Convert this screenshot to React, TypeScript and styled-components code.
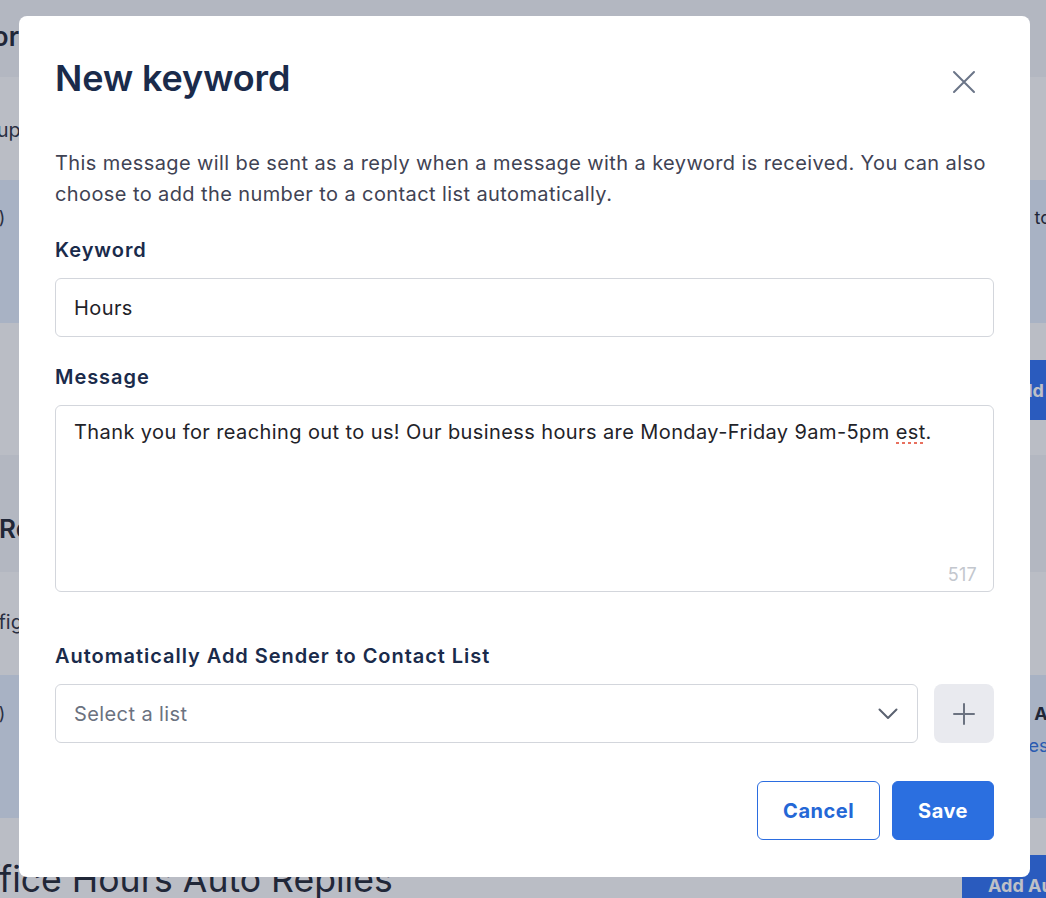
import React from 'react';
import styled, { createGlobalStyle } from 'styled-components';

const GlobalStyle = createGlobalStyle`
	* {
		box-sizing: border-box;
	}
	html,
	body {
		margin: 0;
		padding: 0;
		overflow: hidden;
	}
	body {
		font-family: Inter, 'Noto Sans', sans-serif;
		background: #fafbfd;
		color: #1b2a4b;
	}
`;

type Tone = 'gray' | 'white' | 'blue';

const tones: Record<Tone, string> = {
	gray: '#f0f2f7',
	white: '#fafbfd',
	blue: '#e0ebfb',
};

// settings page sitting behind the dialog (scrolled a little to the right)
const Page = styled.div`
	width: 1180px;
	margin-left: -40px;
	display: flex;
	flex-direction: column;
`;

const Band = styled.section<{ $tone: Tone; $h: number; $top: number }>`
	height: ${p => p.$h}px;
	padding-top: ${p => p.$top}px;
	background: ${p => tones[p.$tone]};
	display: flex;
	align-items: flex-start;
	justify-content: space-between;
	overflow: hidden;
`;

const PageTitle = styled.h2<{ $size?: number; $weight?: number }>`
	margin: 0;
	font-size: ${p => p.$size || 26}px;
	line-height: 1.22;
	font-weight: ${p => p.$weight || 600};
	color: #1e2433;
	white-space: nowrap;
`;

const PageText = styled.p<{ $size?: number }>`
	margin: 0;
	font-size: ${p => p.$size || 18}px;
	line-height: 24px;
	color: #2b3040;
	white-space: nowrap;
`;

const RowCell = styled.div`
	width: 135px;
	display: flex;
	flex-direction: column;
	gap: 8px;
	font-size: 18px;
	line-height: 24px;
	white-space: nowrap;
`;

const CellName = styled.span<{ $bold?: boolean }>`
	font-weight: ${p => (p.$bold ? 700 : 400)};
	color: #1e2433;
`;

const CellLink = styled.span`
	margin-left: -3px;
	color: #2b6fe0;
`;

const PageButton = styled.button<{ $offset?: number; $left: number; $right: number }>`
	margin-top: ${p => p.$offset || 0}px;
	height: 60px;
	padding: 0 ${p => p.$right}px 0 ${p => p.$left}px;
	border: none;
	border-radius: 4px;
	background: #2b6ff3;
	color: #fff;
	font-family: inherit;
	font-size: 18px;
	font-weight: 700;
	white-space: nowrap;
`;

// dialog
const Overlay = styled.div`
	position: fixed;
	inset: 0;
	background: rgba(40, 48, 70, 0.3);
	display: flex;
	align-items: flex-start;
	padding: 16px 0 0 19px;
`;

const Dialog = styled.div`
	width: 1011px;
	background: #fff;
	border-radius: 8px;
	padding: 40px 36px 37px;
`;

const Header = styled.div`
	display: flex;
	align-items: flex-start;
	justify-content: space-between;
`;

const Title = styled.h1`
	margin: 0;
	font-size: 36px;
	line-height: 44px;
	font-weight: 600;
	color: #1a2b4b;
	letter-spacing: -0.1px;
`;

const CloseButton = styled.button`
	width: 40px;
	height: 40px;
	margin: 6px 10px 0 0;
	padding: 0;
	border: none;
	background: transparent;
	color: #6b7588;
	display: flex;
	align-items: center;
	justify-content: center;
	cursor: pointer;
`;

const Intro = styled.p`
	margin: 46px 0 0;
	font-size: 20px;
	line-height: 31px;
	letter-spacing: 0.4px;
	color: #3f4354;
`;

const Label = styled.label<{ $gap: number }>`
	display: block;
	margin: ${p => p.$gap}px 0 14px;
	font-size: 20px;
	line-height: 28px;
	font-weight: 600;
	color: #1a2b4b;
	letter-spacing: 0.95px;
`;

const Input = styled.div`
	height: 59px;
	padding: 0 18px;
	border: 1px solid #d3d6dc;
	border-radius: 6px;
	display: flex;
	align-items: center;
	font-size: 20px;
	letter-spacing: 0.4px;
	color: #1f2329;
`;

const TextBox = styled.div`
	position: relative;
	height: 187px;
	padding: 12px 18px;
	border: 1px solid #d3d6dc;
	border-radius: 6px;
	font-size: 20px;
	line-height: 28px;
	letter-spacing: 0.4px;
	color: #1f2329;
`;

const Misspelled = styled.span`
	background-image: linear-gradient(to right, #e8705f 50%, transparent 50%);
	background-size: 6px 2px;
	background-repeat: repeat-x;
	background-position: left bottom;
`;

const Counter = styled.span`
	position: absolute;
	right: 16px;
	bottom: 6px;
	font-size: 18px;
	line-height: 20px;
	letter-spacing: 0.3px;
	color: #c3c7ce;
`;

const SelectRow = styled.div`
	display: flex;
	gap: 16px;
`;

const Select = styled.div`
	flex: 1;
	height: 59px;
	padding: 0 19px 0 18px;
	border: 1px solid #d3d6dc;
	border-radius: 6px;
	display: flex;
	align-items: center;
	justify-content: space-between;
	font-size: 20px;
	letter-spacing: 0.4px;
	color: #6b7280;
`;

const IconButton = styled.button`
	width: 60px;
	height: 59px;
	padding: 0;
	border: none;
	border-radius: 8px;
	background: #e9eaef;
	color: #6b7280;
	display: flex;
	align-items: center;
	justify-content: center;
`;

const Footer = styled.div`
	margin-top: 38px;
	display: flex;
	justify-content: flex-end;
	gap: 12px;
`;

const ActionButton = styled.button<{ $primary?: boolean }>`
	height: 59px;
	padding: 0 25px;
	border-radius: 6px;
	border: 1px solid #2b6de0;
	background: ${p => (p.$primary ? '#2b6fe0' : '#fff')};
	color: ${p => (p.$primary ? '#fff' : '#2467d6')};
	font-family: inherit;
	font-size: 20px;
	font-weight: 700;
	letter-spacing: 0.5px;
	cursor: pointer;
`;

const CloseIcon = () => (
	<svg width='26' height='26' viewBox='0 0 26 26' fill='none' stroke='currentColor' strokeWidth='2' strokeLinecap='round'>
		<path d='M3 3 L23 23 M23 3 L3 23' />
	</svg>
);

const ChevronIcon = () => (
	<svg width='20' height='12' viewBox='0 0 20 12' fill='none' stroke='#5b6270' strokeWidth='2' strokeLinecap='round' strokeLinejoin='round'>
		<path d='M1.5 1.5 L10 10 L18.5 1.5' />
	</svg>
);

const PlusIcon = () => (
	<svg width='22' height='22' viewBox='0 0 22 22' fill='none' stroke='currentColor' strokeWidth='2' strokeLinecap='round'>
		<path d='M11 1 V21 M1 11 H21' />
	</svg>
);

const App: React.FC = () => {
	return (
		<>
			<GlobalStyle />
			<Page>
				<Band $tone='gray' $h={77} $top={21}>
					<PageTitle>Shortcodes</PageTitle>
				</Band>
				<Band $tone='white' $h={103} $top={41}>
					<PageText $size={20}>Set up keywords that trigger replies</PageText>
				</Band>
				<Band $tone='blue' $h={143} $top={26}>
					<PageText>All(3)</PageText>
					<RowCell>
						<CellName>Up to 3 replies</CellName>
					</RowCell>
				</Band>
				<Band $tone='white' $h={132} $top={37}>
					<span />
					<PageButton $left={29} $right={14}>
						Add Keyword
					</PageButton>
				</Band>
				<Band $tone='gray' $h={117} $top={58}>
					<PageTitle>All Replies</PageTitle>
				</Band>
				<Band $tone='white' $h={103} $top={38}>
					<PageText $size={20}>Configure automatic replies</PageText>
				</Band>
				<Band $tone='blue' $h={143} $top={27}>
					<PageText>All(5)</PageText>
					<RowCell>
						<CellName $bold>On Autopilot</CellName>
						<CellLink>Rules</CellLink>
					</RowCell>
				</Band>
				<Band $tone='white' $h={120} $top={40}>
					<PageTitle $size={35.6} $weight={400}>
						Office Hours Auto Replies
					</PageTitle>
					<PageButton $offset={-3} $left={26} $right={16}>
						Add Auto Reply
					</PageButton>
				</Band>
			</Page>

			<Overlay>
				<Dialog role='dialog' aria-labelledby='keyword-title'>
					<Header>
						<Title id='keyword-title'>New keyword</Title>
						<CloseButton aria-label='Close'>
							<CloseIcon />
						</CloseButton>
					</Header>
					<Intro>
						This message will be sent as a reply when a message with a keyword is received. You can also
						choose to add the number to a contact list automatically.
					</Intro>

					<Label $gap={26}>Keyword</Label>
					<Input>Hours</Input>

					<Label $gap={26}>Message</Label>
					<TextBox>
						Thank you for reaching out to us! Our business hours are Monday-Friday 9am-5pm{' '}
						<Misspelled>est</Misspelled>.
						<Counter>517</Counter>
					</TextBox>

					<Label $gap={50}>Automatically Add Sender to Contact List</Label>
					<SelectRow>
						<Select>
							<span>Select a list</span>
							<ChevronIcon />
						</Select>
						<IconButton aria-label='New list'>
							<PlusIcon />
						</IconButton>
					</SelectRow>

					<Footer>
						<ActionButton>Cancel</ActionButton>
						<ActionButton $primary>Save</ActionButton>
					</Footer>
				</Dialog>
			</Overlay>
		</>
	);
};

export default App;
